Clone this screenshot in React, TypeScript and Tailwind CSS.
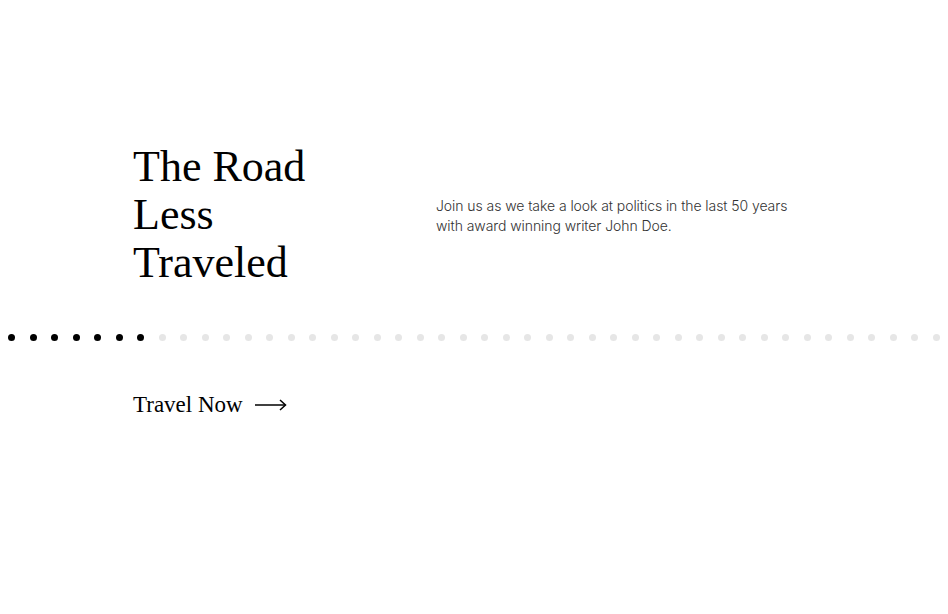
const DOTS = 44
const ACTIVE = 7

export default function App() {
    return (
        <main className="min-h-[614px] w-full bg-white pt-[143px]">
            <section className="flex items-center pl-[133px]">
                <h1
                    className="w-[303px] shrink-0 text-[44px] leading-[48px] text-black"
                    style={{ fontFamily: '"Liberation Serif", "DejaVu Serif", serif' }}
                >
                    The Road
                    <br />
                    Less
                    <br />
                    Traveled
                </h1>
                <p
                    className="mt-[1px] w-[370px] text-[14px] font-light leading-[20px] tracking-[-0.07px] text-[#333333]"
                    style={{ fontFamily: 'Inter, "Noto Sans", sans-serif' }}
                >
                    Join us as we take a look at politics in the last 50 years with award winning writer John Doe.
                </p>
            </section>

            <div className="mt-[47px] flex items-center justify-between px-2">
                {Array.from({ length: DOTS }).map((_, i) => (
                    <span
                        key={`dot-${i}`}
                        className={`block h-[7px] w-[7px] rounded-full ${i < ACTIVE ? 'bg-black' : 'bg-[#e6e6e6]'}`}
                    />
                ))}
            </div>

            <a
                href="#"
                className="ml-[133px] mt-[50px] inline-flex items-center gap-[12px] text-[23px] leading-[28px] text-black"
                style={{ fontFamily: '"Liberation Serif", "DejaVu Serif", serif' }}
            >
                Travel Now
                <svg width="32" height="12" viewBox="0 0 32 12" fill="none" stroke="currentColor" strokeWidth="1.5">
                    <path d="M0 6h30" />
                    <path d="M25 1l5.5 5-5.5 5" />
                </svg>
            </a>
        </main>
    )
}
